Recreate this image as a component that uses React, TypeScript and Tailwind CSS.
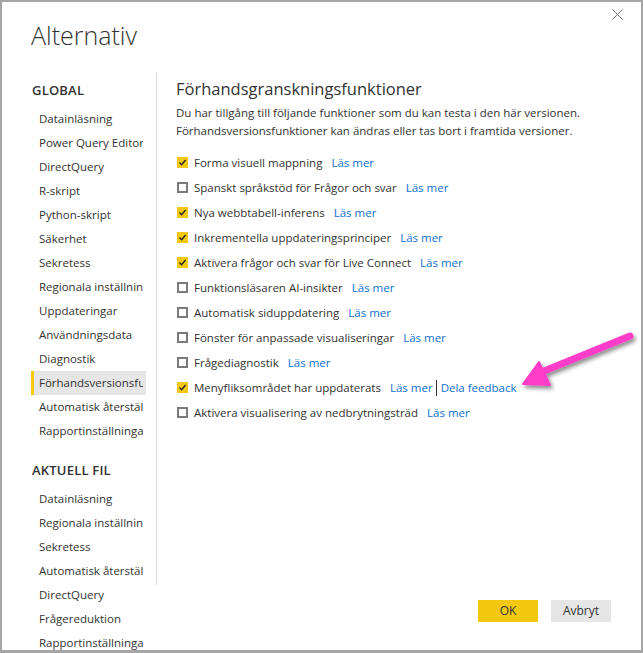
import React from 'react';

const globalItems = [
  'Datainläsning',
  'Power Query Editor',
  'DirectQuery',
  'R-skript',
  'Python-skript',
  'Säkerhet',
  'Sekretess',
  'Regionala inställningar',
  'Uppdateringar',
  'Användningsdata',
  'Diagnostik',
  'Förhandsversionsfunktioner',
  'Automatisk återställning',
  'Rapportinställningar',
];

const fileItems = [
  'Datainläsning',
  'Regionala inställningar',
  'Sekretess',
  'Automatisk återställning',
  'DirectQuery',
  'Frågereduktion',
  'Rapportinställningar',
];

const features = [
  { label: 'Forma visuell mappning', checked: true },
  { label: 'Spanskt språkstöd för Frågor och svar', checked: false },
  { label: 'Nya webbtabell-inferens', checked: true },
  { label: 'Inkrementella uppdateringsprinciper', checked: true },
  { label: 'Aktivera frågor och svar för Live Connect', checked: true },
  { label: 'Funktionsläsaren AI-insikter', checked: false },
  { label: 'Automatisk siduppdatering', checked: false },
  { label: 'Fönster för anpassade visualiseringar', checked: false },
  { label: 'Frågediagnostik', checked: false },
  { label: 'Menyfliksområdet har uppdaterats', checked: true, feedback: true },
  { label: 'Aktivera visualisering av nedbrytningsträd', checked: false },
];

const Checkbox = ({ checked }: { checked: boolean }) =>
  checked ? (
    <span className="w-[11px] h-[11px] bg-[#f2c811] flex items-center justify-center shrink-0">
      <svg width="9" height="9" viewBox="0 0 9 9">
        <path d="M1.5 4.6 L3.6 6.7 L7.6 2" fill="none" stroke="#252423" strokeWidth="1.4" />
      </svg>
    </span>
  ) : (
    <span className="w-[11px] h-[11px] border-2 border-[#7a7a7a] bg-white shrink-0" />
  );

const NavItem = ({ label, active }: { label: string; active?: boolean }) => (
  <div
    className={`h-6 flex items-center w-[115px] border-l-[3px] ${
      active ? 'bg-[#e6e6e6] border-[#f2c811]' : 'border-transparent'
    }`}
  >
    <span className="pl-[5px] w-[109px] overflow-hidden whitespace-nowrap text-[11.5px] text-[#333]">
      {label}
    </span>
  </div>
);

export default function App() {
  return (
    <div
      className="relative w-[643px] h-[653px] bg-white border-2 border-b-[3px] border-[#a6a6a6] overflow-hidden text-[#252423]"
      style={{ fontFamily: '"Open Sans", "Noto Sans", sans-serif' }}
    >
      {/* Header */}
      <div className="h-[70px] flex justify-between">
        <h1 className="pl-[29px] pt-[17px] text-[25px] font-light leading-[33px] text-[#333]">Alternativ</h1>
        <button className="w-10 h-7 flex items-start justify-center pt-[7px] pr-2">
          <svg width="11" height="11" viewBox="0 0 11 11">
            <path d="M0.5 0.5 L10.5 10.5 M10.5 0.5 L0.5 10.5" stroke="#707070" strokeWidth="1" />
          </svg>
        </button>
      </div>

      <div className="flex">
        {/* Sidebar */}
        <div className="w-[154px] pl-[29px] shrink-0">
          <div className="mt-[9px] pl-px text-[13px] font-semibold leading-[18px] text-[#333] tracking-[0.2px]">GLOBAL</div>
          <div className="mt-2">
            {globalItems.map((item) => (
              <NavItem key={item} label={item} active={item === 'Förhandsversionsfunktioner'} />
            ))}
          </div>
          <div className="mt-[18px] pl-px text-[13px] font-semibold leading-[18px] text-[#333] tracking-[0.2px]">AKTUELL FIL</div>
          <div className="mt-2">
            {fileItems.map((item) => (
              <NavItem key={item} label={item} />
            ))}
          </div>
        </div>

        <div className="w-px h-[513px] bg-[#e1e1e1] shrink-0" />

        {/* Content */}
        <div className="pl-[19px] flex-1">
          <h2 className="mt-[5px] text-[16.5px] leading-[24px] text-[#333]">Förhandsgranskningsfunktioner</h2>
          <p className="mt-[3px] text-[11.5px] leading-[18px] text-[#333]">
            Du har tillgång till följande funktioner som du kan testa i den här versionen.
            <br />
            Förhandsversionsfunktioner kan ändras eller tas bort i framtida versioner.
          </p>
          <div className="mt-[10px] flex flex-col">
            {features.map((f) => (
              <div key={f.label} className="h-[25px] flex items-center text-[11.5px] pl-px">
                <Checkbox checked={f.checked} />
                <span className="ml-[6px] text-[#333]">{f.label}</span>
                <span className="ml-[9px] text-[#1170cf]">Läs mer</span>
                {f.feedback && (
                  <>
                    <span className="ml-[3px] mr-[4px] w-px h-[16px] bg-[#333]" />
                    <span className="text-[#1170cf]">Dela feedback</span>
                  </>
                )}
              </div>
            ))}
          </div>
        </div>
      </div>

      {/* Footer buttons */}
      <div className="absolute left-0 right-0 top-[598px] flex justify-end gap-[13px] pr-[30px]">
        <button className="w-[60px] h-[22px] bg-[#f2c811] text-[12px] text-[#333]">OK</button>
        <button className="w-[60px] h-[22px] bg-[#e6e6e6] text-[12px] text-[#333]">Avbryt</button>
      </div>

      {/* Annotation arrow */}
      <svg className="absolute left-0 top-0 pointer-events-none" width="643" height="653">
        <defs>
          <filter id="sh" x="-20%" y="-20%" width="140%" height="140%">
            <feGaussianBlur in="SourceAlpha" stdDeviation="2" />
            <feOffset dx="2" dy="3" />
            <feComponentTransfer>
              <feFuncA type="linear" slope="0.45" />
            </feComponentTransfer>
            <feMerge>
              <feMergeNode />
              <feMergeNode in="SourceGraphic" />
            </feMerge>
          </filter>
        </defs>
        <g filter="url(#sh)" transform="translate(-2 -2)">
          <line x1="630" y1="336" x2="544" y2="371" stroke="#ff3dc8" strokeWidth="7" strokeLinecap="round" />
          <path d="M523 384 L539 362 L550 385 Z" fill="#ff3dc8" stroke="#ff3dc8" strokeWidth="2" strokeLinejoin="round" />
        </g>
      </svg>
    </div>
  );
}
